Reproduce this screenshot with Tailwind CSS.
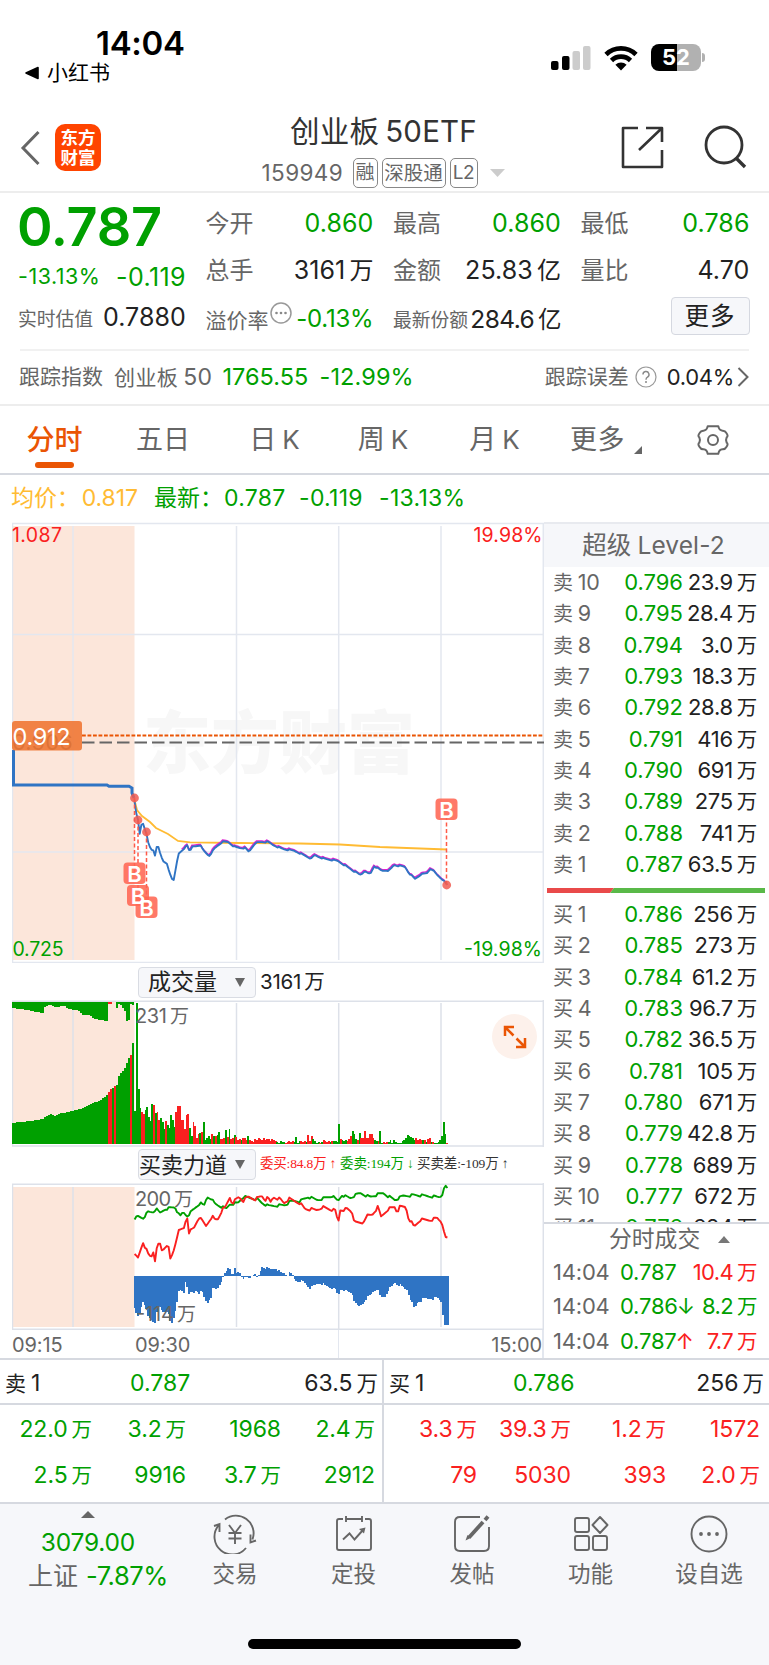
<!DOCTYPE html>
<html lang="zh-CN">
<head>
<meta charset="utf-8">
<title>创业板50ETF</title>
<script src="https://cdn.jsdelivr.net/npm/@tailwindcss/browser@4"></script>
</head>
<body class="bg-white">
<div class="w-[769px] h-[1665px] overflow-hidden flex flex-col bg-white text-[#222] font-['Inter','Noto_Sans_CJK_SC',sans-serif] whitespace-nowrap">

  <!-- status bar -->
  <div class="h-[96px] flex justify-between shrink-0">
    <div class="pl-[25px] pt-[26px]">
      <div class="pl-[71px] h-[34px] leading-[34px] text-[33px] font-semibold text-black tracking-[-0.3px]">14:04</div>
      <div class="flex items-center gap-2 h-[25px] text-black text-[21px] leading-[25px]">
        <svg width="14" height="14" viewBox="0 0 14 14"><path d="M13 1.5v11L1 7z" fill="#000" stroke="#000" stroke-width="1.6" stroke-linejoin="round"/></svg>小红书
      </div>
    </div>
    <div class="flex items-center pt-[43px] h-[72px] pr-[64px]">
      <svg width="40" height="26" viewBox="0 0 40 26"><rect x="0" y="16" width="7.5" height="9" rx="2"/><rect x="11" y="11" width="7.5" height="14" rx="2"/><rect x="21.500" y="6" width="7.5" height="19" rx="2" fill="#ccc"/><rect x="32" y="1" width="7.500" height="24" rx="2" fill="#ccc"/></svg>
      <svg class="ml-[13px]" width="34" height="26" viewBox="0 0 34 26"><g fill="none" stroke="#000" stroke-width="4.700"><path d="M2 9.500a21.500 21.500 0 0 1 30 0"/><path d="M7.500 15.500a13.700 13.700 0 0 1 19 0"/></g><path d="M17 25.500l-5.600-5.700a8.200 8.200 0 0 1 11.200 0z"/></svg>
      <div class="ml-[13px] w-[50px] h-[27px] rounded-[8px] bg-[linear-gradient(90deg,#000_52%,#b1b1b1_52%)] text-white text-[22px] font-bold leading-[27px] text-center">52</div>
      <div class="w-[3px] h-[9px] ml-px rounded-r-full bg-[#b1b1b1]"></div>
    </div>
  </div>

  <!-- title bar -->
  <div class="h-[97px] shrink-0 flex justify-between border-b-2 border-[#ededed]">
    <div class="flex w-[240px] pl-[20px] pt-[28px]">
      <svg class="mt-[6px]" width="21" height="36" viewBox="0 0 21 36"><path d="M18.500 2L3 18l15.500 16" fill="none" stroke="#666" stroke-width="3"/></svg>
      <div class="ml-[14px] w-[46px] h-[47px] rounded-[10px] bg-[#ff4400] text-white text-[17.500px] leading-[19.500px] font-bold text-center pt-[4px]">东方<br>财富</div>
    </div>
    <div class="pt-[15px]">
      <div class="h-[40px] leading-[40px] text-[29.500px] text-[#333] text-center tracking-[0.2px]">创业板<span class="ml-[6px]">50ETF</span></div>
      <div class="h-[34px] mt-[5px] flex items-center text-[#666] text-[22.500px] -ml-px">
        <span class="tracking-[0.400px] w-[91px]">159949</span>
        <span class="h-[30px] w-[25px] leading-[28px] text-[19px] text-center border-[1.500px] border-[#888] rounded-[5px] flex justify-center">融</span>
        <span class="ml-[4px] h-[30px] w-[64px] leading-[28px] text-[19.500px] border-[1.500px] border-[#888] rounded-[5px] flex justify-center">深股通</span>
        <span class="ml-[4px] h-[30px] w-[28px] leading-[28px] text-[19px] border-[1.500px] border-[#888] rounded-[5px] flex justify-center tracking-[-0.5px]">L2</span>
        <svg class="ml-[12px]" width="15" height="8" viewBox="0 0 15 8"><path d="M0 0h15L7.500 8z" fill="#ccc"/></svg>
      </div>
    </div>
    <div class="flex w-[242px] justify-end pt-[28px] pr-[22px]">
      <svg width="46" height="46" viewBox="0 0 46 46" fill="none" stroke="#333" stroke-width="2.600"><path d="M19 4H4v39h39V26M27 4h16v14M42.500 4.500L20 26" stroke-linejoin="round"/></svg>
      <svg class="ml-[38px]" width="44" height="46" viewBox="0 0 44 46" fill="none" stroke="#333" stroke-width="2.800"><circle cx="21" cy="21" r="18"/><path d="M33.500 34.500L42 43" stroke-width="3.400"/></svg>
    </div>
  </div>

  <!-- quote summary -->
  <div class="h-[156px] shrink-0 grid grid-cols-[168px_168px_168px_169px] gap-x-[19.500px] pl-[18px] pt-px text-[25px] tracking-[0.1px]">
    <div class="pt-[9px]">
      <div class="h-[47px] leading-[47px] text-[54px] font-semibold text-[#00a000] tracking-[-0.3px] -ml-px">0.787</div>
      <div class="h-[55px] flex justify-between items-center text-[#00a000]"><span class="text-[21.500px] pb-[3px] tracking-[0.5px]">-13.13%</span><span class="text-[25px] tracking-[0.4px]">-0.119</span></div>
      <div class="h-[26px] flex justify-between items-center"><span class="text-[18.800px] pt-[5px] text-[#666] tracking-normal">实时估值</span><span>0.7880</span></div>
    </div>
    <div class="pt-[7px]">
      <div class="h-[46px] flex justify-between items-center"><span class="text-[24px] text-[#666] tracking-normal">今开</span><span class="text-[#00a000]">0.860</span></div>
      <div class="h-[48px] flex justify-between items-center"><span class="text-[24px] text-[#666] tracking-normal">总手</span><span>3161<span class="ml-1 text-[24px]">万</span></span></div>
      <div class="h-[48px] flex items-center"><span class="text-[21px] pt-[3px] text-[#666] tracking-normal">溢价率</span>
        <svg class="mb-[12px] ml-px" width="22" height="22" viewBox="0 0 22 22"><circle cx="11" cy="11" r="10" fill="none" stroke="#999" stroke-width="1.500"/><g fill="#888"><circle cx="6.500" cy="11" r="1.300"/><circle cx="11" cy="11" r="1.300"/><circle cx="15.500" cy="11" r="1.300"/></g></svg>
        <span class="ml-auto text-[#00a000] text-[24px] tracking-[-0.2px]">-0.13%</span></div>
    </div>
    <div class="pt-[7px]">
      <div class="h-[46px] flex justify-between items-center"><span class="text-[24px] text-[#666] tracking-normal">最高</span><span class="text-[#00a000]">0.860</span></div>
      <div class="h-[48px] flex justify-between items-center"><span class="text-[24px] text-[#666] tracking-normal">金额</span><span>25.83<span class="ml-1 text-[24px]">亿</span></span></div>
      <div class="h-[48px] flex justify-between items-center"><span class="text-[18.800px] pt-[4px] text-[#666] tracking-normal">最新份额</span><span class="text-[24.500px] tracking-[-0.6px]">284.6<span class="ml-1 text-[23.500px]">亿</span></span></div>
    </div>
    <div class="pt-[7px]">
      <div class="h-[46px] flex justify-between items-center"><span class="text-[24px] text-[#666] tracking-normal">最低</span><span class="text-[#00a000]">0.786</span></div>
      <div class="h-[48px] flex justify-between items-center"><span class="text-[24px] text-[#666] tracking-normal">量比</span><span>4.70</span></div>
      <div class="h-[48px] flex justify-end items-center"><span class="w-[79px] h-[38px] mb-[6px] rounded-[4px] border border-[#d5d8e0] bg-[#f6f7fa] leading-[37px] text-center text-[24.500px] tracking-[1px]">更多</span></div>
    </div>
  </div>
  <div class="h-[55px] shrink-0 mx-[20px] border-t-2 border-[#f1f1f1] flex items-center pb-px text-[21px] text-[#666]">
    <span class="-ml-px">跟踪指数</span><span class="ml-[11px] tracking-[0.4px]">创业板<span class="ml-[5px] text-[23px]">50</span></span>
    <span class="ml-[10px] w-[90px] text-[23.500px] text-[#00a000]">1765.55</span>
    <span class="ml-[7px] text-[23.500px] text-[#00a000] tracking-[0.1px]">-12.99%</span>
    <span class="ml-auto">跟踪误差</span>
    <svg class="ml-[6px]" width="22" height="22" viewBox="0 0 22 22"><circle cx="11" cy="11" r="10" fill="none" stroke="#999" stroke-width="1.200"/><path d="M8 8.600a3 3 0 1 1 4.500 2.500q-1.500.9-1.500 2.600" fill="none" stroke="#888" stroke-width="1.400"/><circle cx="11" cy="16" r="1" fill="#888"/></svg>
    <span class="ml-[10px] text-[#222] text-[22px] tracking-[-0.3px]">0.04%</span>
    <svg class="ml-[3px]" width="12" height="20" viewBox="0 0 12 20"><path d="M1.500 1L10.500 10l-9 9" fill="none" stroke="#666" stroke-width="2"/></svg>
  </div>

  <!-- period tabs -->
  <div class="h-[71px] shrink-0 border-t-2 border-b-2 border-t-[#ededed] border-b-[#d6d9e0] flex text-[27px] text-[#666] leading-[68px]">
    <div class="w-[109px] flex flex-col items-center text-[28px] text-[#ea5504] font-medium"><span class="h-[56px]">分时</span><span class="w-[39px] h-[6px] rounded-full bg-[#ea5504]"></span></div>
    <div class="w-[108px] text-center">五日</div>
    <div class="w-[115px] text-center">日<span class="ml-[6px] text-[26px]">K</span></div>
    <div class="w-[102px] text-center">周<span class="ml-[6px] text-[26px]">K</span></div>
    <div class="w-[121px] text-center">月<span class="ml-[6px] text-[26px]">K</span></div>
    <div class="w-[101px] flex items-center pl-[15px] tracking-[0.5px]">更多<svg class="ml-[9px] mt-[21px]" width="8" height="8" viewBox="0 0 8 8"><path d="M8 0v8H0z" fill="#666"/></svg></div>
    <div class="w-[113px] flex items-center justify-center"><svg width="34" height="32" viewBox="-17 -16 34 32" fill="none" stroke="#666" stroke-width="2"><circle r="5"/><path d="M-5.300-13.800H5.300Q6 -9.600 9.400-9.300Q12-9.600 13.400-7Q15.600-4 13.700-2.700Q12.400 0 13.700 2.700Q15.600 4 13.400 7Q12 9.600 9.400 9.300Q6 9.600 5.300 13.800H-5.300Q-6 9.600-9.400 9.300Q-12 9.600-13.400 7Q-15.600 4-13.700 2.700Q-12.400 0-13.700-2.700Q-15.600-4-13.400-7Q-12-9.600-9.400-9.300Q-6-9.600-5.300-13.800Z" stroke-linejoin="round"/></svg></div>
  </div>

  <!-- price line -->
  <div class="h-[47px] shrink-0 flex items-center pl-[11px] text-[23px] text-[#00a000]">
    <span class="w-[143px] text-[#ffbb33] tracking-[-0.1px]">均价：<span class="ml-[2px]">0.817</span></span><span class="w-[70px]">最新：</span><span class="w-[75px] tracking-[0.300px]">0.787</span><span class="w-[80px] tracking-[0.300px]">-0.119</span><span class="tracking-[0.300px]">-13.13%</span>
  </div>

  <!-- chart and order book -->
  <div class="h-[836px] shrink-0 flex">
    <div class="w-[544px] pl-[12px] flex flex-col">
      <svg width="532" height="441" viewBox="12 522 532 441" class="shrink-0">
        <rect x="12" y="526" width="122.500" height="434" fill="#fce6da"/>
        <text x="143" y="768" textLength="272" font-size="68" font-weight="900" fill="#f7f7f7">东方财富</text>
        <g stroke="#e3e7ef" stroke-width="1.500"><path d="M12 523.500H545M12.500 523V963M543.300 523V963M73 526V960M236.500 526V960M338.700 526V960M441 526V960M12 634.500H544M12 852H544M12 962.500H544"/></g>
        <text x="12" y="750" font-size="22" fill="#666">0.906</text>
        <path d="M82 742.500H544" stroke="#666" stroke-width="2" stroke-dasharray="12.500 5"/>
        <path d="M82 735.500H544" stroke="#ea5504" stroke-width="2" stroke-dasharray="3.800 1.700"/>
        <path d="M13.500 750V785H107L109 786.300H129L132 788V793L134 798" fill="none" stroke="#2f74c4" stroke-width="3"/>
        <path d="M134 798L137 810 142 816 150 822 156 828 168 834 178 841 190 842.300 240 843 300 843.500 340 844.500 380 847 447 849.500" fill="none" stroke="#ffbb33" stroke-width="1.800"/>
        <path id="avg" fill="none" stroke="#e020d0" stroke-width="1.500" transform="translate(-.5 -1.200)"/>
        <path id="price" fill="none" stroke="#2f74c4" stroke-width="1.900" stroke-linejoin="round"/>
        <g stroke="#ff5a48" stroke-width="1.500" stroke-dasharray="4 2.500"><path d="M134.500 798V873M138 820V890M146.500 832V898M446.500 885V815"/></g>
        <g fill="#f05a50" fill-opacity=".85"><circle cx="134.500" cy="798" r="4.400"/><circle cx="138" cy="820" r="4.400"/><circle cx="146.500" cy="832" r="4.400"/><circle cx="446.700" cy="885" r="4.400"/></g>
        <g fill="#ff6753" fill-opacity=".88"><rect x="123.500" y="862.500" width="22" height="21.500" rx="4"/><rect x="127" y="885" width="22" height="21" rx="4"/><rect x="135.500" y="896.500" width="22" height="21.500" rx="4"/><rect x="435.500" y="798.500" width="22" height="21.500" rx="4"/></g>
        <g fill="#fff" font-size="22" font-weight="600" text-anchor="middle"><text x="134.500" y="881.500">B</text><text x="138" y="903.500">B</text><text x="146.500" y="915.500">B</text><text x="446.500" y="817.500">B</text></g>
        <rect x="12" y="721" width="70" height="29.500" rx="3" fill="#ef7430" fill-opacity=".88"/>
        <text x="12.500" y="744.500" font-size="23.500" fill="#fff" textLength="58">0.912</text>
        <g font-size="19.500"><text x="12" y="542" fill="#fa2020" textLength="50">1.087</text><text x="542.500" y="542" fill="#fa2020" text-anchor="end" textLength="69">19.98%</text><text x="12.500" y="955.500" fill="#00a000" textLength="51">0.725</text><text x="542" y="955.500" fill="#00a000" text-anchor="end" textLength="78">-19.98%</text></g>
      </svg>
      <div class="h-[37px] shrink-0 flex items-center pl-[126px] pt-px text-[20.500px]">
        <div class="w-[118px] h-[31px] border border-[#d9dce3] rounded-[4px] bg-[#f6f7fa] flex items-center justify-between pl-[9px] pr-[10px] text-[23px]">成交量<svg width="10" height="9" viewBox="0 0 10 9"><path d="M0 0h10L5 9z" fill="#666"/></svg></div>
        <span class="ml-[4px] tracking-[-0.2px]">3161<span class="ml-[3px]">万</span></span>
      </div>
      <div class="relative shrink-0 h-[147px]">
        <svg width="532" height="147" viewBox="12 1000 532 147">
          <rect x="12" y="1002" width="122.500" height="142" fill="#fce6da"/>
          <path d="M12 1001.300H545M12 1146H545M12.500 1001V1146M543.300 1000V1147M73 1003V1144M236.500 1003V1144M338.700 1003V1144M441 1003V1144" stroke="#dde1e9" stroke-width="1.500"/>
          <g id="vol" shape-rendering="crispEdges"></g>
          <text x="135" y="1023" font-size="20" fill="#666" textLength="32">231</text><text x="170" y="1023" font-size="19" fill="#666">万</text>
        </svg>
        <div class="absolute left-[480px] top-[14px] w-[45px] h-[45px] rounded-full bg-[#fdf1eb] flex items-center justify-center"><svg width="24" height="24" viewBox="0 0 24 24" fill="none" stroke="#ea5504" stroke-width="2.500"><path d="M2 11V2h9M2.500 2.500l8 8M22 13v9h-9M21.500 21.500l-8-8"/></svg></div>
      </div>
      <div class="h-[36px] shrink-0 flex items-center pl-[126px] pb-px text-[13.500px] font-['Liberation_Serif','Noto_Sans_CJK_SC',serif]">
        <div class="w-[118px] h-[31px] border border-[#d9dce3] rounded-[4px] bg-[#f6f7fa] flex items-center justify-between pr-[10px] text-[22px] leading-[28px] font-['Inter','Noto_Sans_CJK_SC',sans-serif]">买卖力道<svg width="10" height="9" viewBox="0 0 10 9"><path d="M0 0h10L5 9z" fill="#666"/></svg></div>
        <span class="ml-[4px] text-[#fa2020] w-[80px] tracking-[-0.2px]">委买:84.8万 ↑</span><span class="text-[#00a000] w-[77px] tracking-[-0.1px]">委卖:194万 ↓</span><span class="text-[#333] tracking-[-0.1px]">买卖差:-109万 ↑</span>
      </div>
      <svg width="532" height="147" viewBox="12 1183 532 147" class="shrink-0">
        <rect x="12" y="1187" width="122.500" height="140" fill="#fce6da"/>
        <path d="M12 1184.300H545M12 1329.300H545M12.500 1184V1329M543.300 1183V1330M73 1187V1327M236.500 1187V1327M338.700 1187V1330M441 1187V1327" stroke="#dde1e9" stroke-width="1.500"/>
        <g id="flow" fill="#2f74c4" shape-rendering="crispEdges"></g>
        <g font-size="20" fill="#666"><text x="135" y="1206" textLength="36">200</text><text x="174" y="1206" font-size="19">万</text><text x="136" y="1321" textLength="38">-114</text><text x="177" y="1321" font-size="19">万</text></g>
        <path id="sell" fill="none" stroke="#00a000" stroke-width="1.900" stroke-linejoin="round"/>
        <path id="buy" fill="none" stroke="#fa2020" stroke-width="1.900" stroke-linejoin="round"/>
      </svg>
      <div class="h-[29px] shrink-0 flex items-center text-[20px] text-[#666] border-r-2 border-[#e3e7ef] tracking-[-0.1px]"><span class="w-[123px]">09:15</span><span class="w-[203px]">09:30</span><span class="h-full border-l border-[#e3e7ef]"></span><span class="ml-auto">15:00</span></div>
    </div>

    <div class="w-[225px] flex flex-col border-t-2 border-[#e8eaef]">
      <div class="h-[43px] shrink-0 bg-[#f6f7fa] text-[#666] text-[24.500px] leading-[43px] text-center pr-[6px] tracking-[0.1px]">超级<span class="ml-[6px]">Level-2</span></div>
      <div id="asks" class="shrink-0"></div>
      <svg class="shrink-0 ml-[3px] mt-[8px]" width="218" height="5" viewBox="0 0 218 5"><path d="M0 0h67l-4 5H0z" fill="#e94a4a"/><path d="M67 0h151v5H63z" fill="#59b948"/></svg>
      <div id="bids" class="mt-[6px] h-[323px] overflow-hidden shrink-0"></div>
      <div class="h-[33px] shrink-0 border-t-2 border-[#d6d9e0] flex items-center pl-[65px] text-[22.800px] text-[#666]">分时成交<svg class="ml-[18px]" width="12" height="7" viewBox="0 0 12 7"><path d="M0 7h12L6 0z" fill="#777"/></svg></div>
      <div id="deals" class="flex-1"></div>
    </div>
  </div>

  <!-- best bid / ask queue -->
  <div class="h-[146px] shrink-0 grid grid-cols-[384px_385px] border-y-2 border-[#d6d9e0] text-[23px]">
    <div class="border-r-2 border-[#d6d9e0]">
      <div class="h-[45px] border-b-2 border-[#d6d9e0] flex items-center pl-[5px] pr-[4px] pt-[3px]"><span class="w-[125px]"><span class="text-[21px]">卖</span><span class="ml-[5px]">1</span></span><span class="text-[#00a000]">0.787</span><span class="ml-auto">63.5<span class="ml-1 text-[21.500px]">万</span></span></div>
      <div id="askQueue" class="grid grid-cols-[92px_94px_95px_94px] text-right text-[#00a000] pt-[2px]"></div>
    </div>
    <div>
      <div class="h-[45px] border-b-2 border-[#d6d9e0] flex items-center pl-[5px] pr-[5px] pt-[3px]"><span class="w-[124px]"><span class="text-[21px]">买</span><span class="ml-[5px]">1</span></span><span class="text-[#00a000]">0.786</span><span class="ml-auto">256<span class="ml-1 text-[21.500px]">万</span></span></div>
      <div id="bidQueue" class="grid grid-cols-[93px_94px_95px_94px] text-right text-[#fa2020] pt-[2px]"></div>
    </div>
  </div>

  <!-- bottom navigation -->
  <div class="flex-1 bg-[#f6f7fa] flex flex-col items-center">
    <div class="w-full h-[135px] flex text-[22.500px] text-[#666]">
      <div class="w-[176px] flex flex-col items-center pt-[7px]">
        <svg width="14" height="7" viewBox="0 0 14 7"><path d="M0 7h14L7 0z" fill="#666"/></svg>
        <span class="h-[34px] mt-[7px] leading-[34px] text-[24.500px] text-[#00a000] tracking-[-0.2px]">3079.00</span>
        <span class="h-[34px] leading-[34px] pl-[20px]"><span class="text-[25px]">上证</span><span class="text-[25.500px] ml-[8px] text-[#00a000] tracking-[-0.4px]">-7.87%</span></span>
      </div>
      <div class="w-[118px] flex flex-col items-center pt-[10px]"><svg width="44" height="40" viewBox="-22 -20 44 40" fill="none" stroke="#666" stroke-width="1.900"><path d="M-10-14.600A17.700 17.700 0 0 1 17.500 5.500M11 14A17.700 17.700 0 0 1-16.500-8.500M-21-8l5.500-2v8M21 6.500l-5.500 2v-8"/><path d="M-6-9L0-1 6-9M0-1V10M-6.500-1h13M-6.500 4.500h13"/></svg><span class="leading-[40px]">交易</span></div>
      <div class="w-[119px] flex flex-col items-center pt-[10px]"><svg width="44" height="40" viewBox="-22 -20 44 40" fill="none" stroke="#666" stroke-width="1.900"><path d="M-11-15h-4q-2 0-2 2V14q0 2 2 2H15q2 0 2-2V-13q0-2-2-2h-4M-8-15H8M-8-18v6M8-18v6" /><path d="M-11 5.500l6.500-6 5 6L9-4"/><path d="M5-5l6.500-1.500-1.500 6z" fill="#666" stroke="none"/></svg><span class="leading-[40px]">定投</span></div>
      <div class="w-[118px] flex flex-col items-center pt-[10px]"><svg width="44" height="40" viewBox="-22 -20 44 40" fill="none" stroke="#666" stroke-width="1.900"><path d="M8-17H-12q-5 0-5 5V12q0 5 5 5H12q5 0 5-5V-7" /><path d="M-3 3.500L11-12" stroke-width="3.800"/><path d="M-6.500 6.500l2-5.500 3.200 3z" fill="#666" stroke="none"/><path d="M13-14l3-3.500" stroke-width="3.800"/></svg><span class="leading-[40px]">发帖</span></div>
      <div class="w-[119px] flex flex-col items-center pt-[10px]"><svg width="44" height="40" viewBox="-22 -20 44 40" fill="none" stroke="#666" stroke-width="1.900"><rect x="-16" y="-16" width="14" height="14" rx="2"/><rect x="-16" y="2" width="14" height="14" rx="2"/><rect x="2" y="2" width="14" height="14" rx="2"/><path d="M9-17l7.500 8L9-1 1.500-9z" stroke-linejoin="round"/></svg><span class="leading-[40px]">功能</span></div>
      <div class="w-[118px] flex flex-col items-center pt-[10px]"><svg width="44" height="40" viewBox="-22 -20 44 40" fill="none" stroke="#666" stroke-width="1.900"><circle r="17.500"/><g fill="#666" stroke="none"><circle cx="-8" r="1.900"/><circle r="1.900"/><circle cx="8" r="1.900"/></g></svg><span class="leading-[40px]">设自选</span></div>
    </div>
    <div class="w-[273px] h-[10px] rounded-full bg-black"></div>
  </div>
</div>

<script>
const $ = id => document.getElementById(id);
const amount = v => v.endsWith('万') ? `${v.slice(0,-1)}<span class="ml-1 text-[20.500px]">万</span>` : v;

const row = (side, n, price, vol) => `<div class="h-[31.300px] flex items-center pl-[9px] pr-[12px] text-[22px] tracking-[-0.3px]">
  <span class="text-[#666] w-[60px]"><span class="text-[20px]">${side}</span><span class="ml-[5px] text-[21.500px]">${n}</span></span>
  <span class="w-[70px] text-right text-[#00a000] tracking-[0px]">${price}</span><span class="ml-auto">${amount(vol)}</span></div>`;
const askVol = ['63.5万','741万','275万','691万','416万','28.8万','18.3万','3.0万','28.4万','23.9万'];
const bidVol = ['256万','273万','61.2万','96.7万','36.5万','105万','671万','42.8万','689万','672万','624万'];
$('asks').innerHTML = askVol.map((v,i) => row('卖', i+1, (0.787+i/1000).toFixed(3), v)).reverse().join('');
$('bids').innerHTML = bidVol.map((v,i) => row('买', i+1, (0.786-i/1000).toFixed(3), v)).join('');

const red = 'text-[#fa2020]', green = 'text-[#00a000]';
$('deals').innerHTML = [['0.787','','10.4万',red],['0.786','↓','8.2万',green],['0.787','↑','7.7万',red]].map(([p,a,v,c]) =>
  `<div class="h-[34.500px] flex items-center pl-[9px] pr-[12px] text-[22px] tracking-[-0.2px]"><span class="text-[#666] w-[67px]">14:04</span><span class="text-[#00a000]">${p}</span><span class="w-[14px] -ml-px ${c}">${a}</span><span class="ml-auto tracking-[-0.6px] ${c}">${amount(v)}</span></div>`).join('');

const cell = v => `<span class="h-[45.500px] leading-[45.500px] tracking-[-0.1px]">${amount(v)}</span>`;
$('askQueue').innerHTML = ['22.0万','3.2万','1968','2.4万','2.5万','9916','3.7万','2912'].map(cell).join('');
$('bidQueue').innerHTML = ['3.3万','39.3万','1.2万','1572','79','5030','393','2.0万'].map(cell).join('');

// linear interpolation over a flat [x, y, x, y, ...] list
const at = (p, x) => { for (let i = 2; i < p.length; i += 2) if (x <= p[i]) { const t = (x-p[i-2])/(p[i]-p[i-2]); return p[i-1]+t*(p[i+1]-p[i-1]); } return p[p.length-1]; };
const jag = (i, a) => (((i*7919)%13)/6-1)*a;
const line = (p, a, from = 0) => { let d = ''; for (let i = from; i <= 184; i++) { const x = 134.6+i*1.7; d += (i>from?'L':'M')+x.toFixed(1)+' '+(at(p,x)+jag(i,a)).toFixed(1); } return d; };

const price = [134,798,136,813,138,820,139.5,835,141,825,143,823,146,832,148,842,151,850,153,849,155,855,156.500,848,158,846,160,853,163,861,167,863,169,872,172,879,173.500,881,176,867,178,855,182,851,184,849,187,844,190,852,192,847,200,845,203,850,209,856,215,848,222,842,228,842,235,847,240,848,245,848,249,852,255,843,262,842,268,842,273,845,283,849,295,851,312,859,314,855,325,859,338,861,360,875,363,873,365,870,368,874,371,873,374,866,382,871,390,870,394,865,405,867,409,873,415,879,420,875,427,873,431,868,437,875,442,879,447,885];
$('price').setAttribute('d', line(price, .7));
$('avg').setAttribute('d', line(price, .7, 28));

const buy = [134,1255,138,1258,143,1242,149,1256,152,1256,153.500,1251,155,1260,157.500,1245,160,1244,162,1251,165,1247,168,1243,170,1260,173,1253,176,1241,178,1232,184,1228,187,1215,189,1232,194,1228,199,1217,206,1226,212,1216,215,1220,218,1219,222,1210,225,1208,230,1197,232,1203,239,1197,243,1201,248,1197,255,1199,262,1196,265,1200,268,1198,271,1203,273,1197,280,1199,284,1203,289,1199,300,1203,305,1209,317,1210,322,1207,336,1211,338,1225,340,1210,347,1209,352,1212,355,1223,363,1223,366,1216,372,1215,378,1207,381,1217,388,1209,395,1207,397,1212,400,1207,406,1207,408,1217,412,1223,414,1227,420,1220,430,1220,437,1218,442,1222,443,1228,445,1238,448,1238];
const sell = [134,1222,137,1216,143,1218,148,1212,153,1212,156,1209,160,1213,165,1209,175,1207,180,1217,183,1212,187,1216,193,1210,200,1203,204,1206,207,1197,211,1198,215,1204,222,1207,226,1209,230,1204,238,1203,243,1197,257,1199,262,1203,268,1206,285,1205,292,1201,300,1201,308,1197,317,1200,332,1196,338,1201,342,1195,350,1198,360,1193,370,1197,383,1193,395,1200,403,1196,414,1195,440,1197,443,1193,445,1186,448,1189];
$('buy').setAttribute('d', line(buy, 1.5));
$('sell').setAttribute('d', line(sell, 1.3));

const flow = [134,1308,137,1317,139,1315,143,1300,145,1305,148,1317,151,1320,155,1322,157,1310,160,1307,163,1312,166,1310,168,1313,171,1326,173,1320,176,1307,178,1293,181,1290,184,1293,186,1277,188,1293,194,1293,196,1290,199,1293,202,1292,204,1297,207,1303,211,1297,213,1288,217,1290,220,1283,223,1278,225,1273,227,1271,229,1266,232,1275,235,1269,237,1275,239,1270,241,1275,243,1278,250,1278,255,1272,257,1278,259,1275,262,1267,271,1270,276,1268,281,1273,285,1273,287,1276,290,1273,293,1276,295,1280,303,1282,310,1288,315,1285,320,1283,327,1286,336,1290,338,1296,341,1288,347,1292,352,1293,355,1303,359,1307,363,1303,367,1298,372,1293,377,1288,380,1297,385,1297,388,1290,395,1283,403,1287,407,1290,410,1298,414,1308,418,1302,423,1299,437,1298,442,1302,443.500,1327,449,1325];
let h = '';
for (let i = 0; i < 185; i++) { const x = 133.5+i*1.704, y = at(flow, x+.8)+jag(i,1.3); h += `<rect x="${x}" y="${Math.min(1276,y)}" width="1.900" height="${Math.abs(1276-y)}"/>`; }
$('flow').innerHTML = h;

// auction session: columns rising from the bottom and hanging from the top
const low = [12,1123,30,1121,43,1119,48,1115,52,1113,54,1117,58,1114,73,1111,83,1108,92,1103,100,1101,107,1095,110,1090,115,1086,118,1085,119,1076,125,1068,128,1060,131,1055,132,1049,134,1036];
const high = [12,1008,27,1010,43,1013,45,1007,50,1004,55,1007,65,1006,68,1009,78,1010,83,1015,90,1015,93,1018,100,1020,107,1021,108,1004,111,1004,111.500,1002,116,1002,117,1008,119,1004,122,1006,125,1011,127,1021,129,1020,130,1003,134,1005];
const RED = '#fa2020', GREEN = '#00a000';
h = '';
for (let x = 12; x < 134; x += 2) {
  const r = (x > 107 && x < 111) || (x > 112.5 && x < 114.5) || (x > 128.8 && x < 131), y = at(low, x+1), t = at(high, x+1);
  h += `<rect x="${x}" y="${y}" width="2" height="${1144-y}" fill="${r?RED:GREEN}"/><rect x="${x}" y="1001.500" width="2" height="${Math.max(0,t-1001.5)}" fill="${x>107&&x<111?RED:GREEN}"/>`;
}
// one bar per minute; a negative value is a red bar
const vol = [33,141,55,36,-32,-30,34,37,27,23,40,-39,31,-32,-24,26,22,15,-23,19,16,29,24,17,-32,-38,-38,-24,-24,-15,-29,-30,16,8,-22,-18,-6,-10,11,-12,22,4,6,8,5,-10,8,-8,9,12,-5,-5,-6,14,-7,15,-5,-6,9,-7,-4,-5,4,-6,-6,-4,8,-4,-3,-2,-5,-4,-6,-5,-4,-6,-4,-5,-5,-3,-5,-4,-3,2,1,3,2,2,-1,-2,-3,-2,-3,2,7,1,3,-3,-2,-3,2,-9,-3,-8,5,3,1,2,-1,2,-4,-3,-2,-3,2,-3,3,3,2,20,-5,4,3,4,-3,-5,-8,13,10,5,-4,11,-6,-6,-13,-6,-6,-10,-10,-6,4,3,-3,13,1,-2,-1,-2,2,4,1,4,2,1,1,1,3,4,6,9,8,7,6,4,-6,-4,-5,-4,4,-4,2,-5,-6,2,-2,1,1,2,4,8,22,10,-1];
vol.forEach((v,i) => { const k = Math.abs(v); h += `<rect x="${134.3+i*(313.5/vol.length)}" y="${1144-k}" width="1.900" height="${k}" fill="${v<0?RED:GREEN}"/>`; });
$('vol').innerHTML = h;
</script>
</body>
</html>
